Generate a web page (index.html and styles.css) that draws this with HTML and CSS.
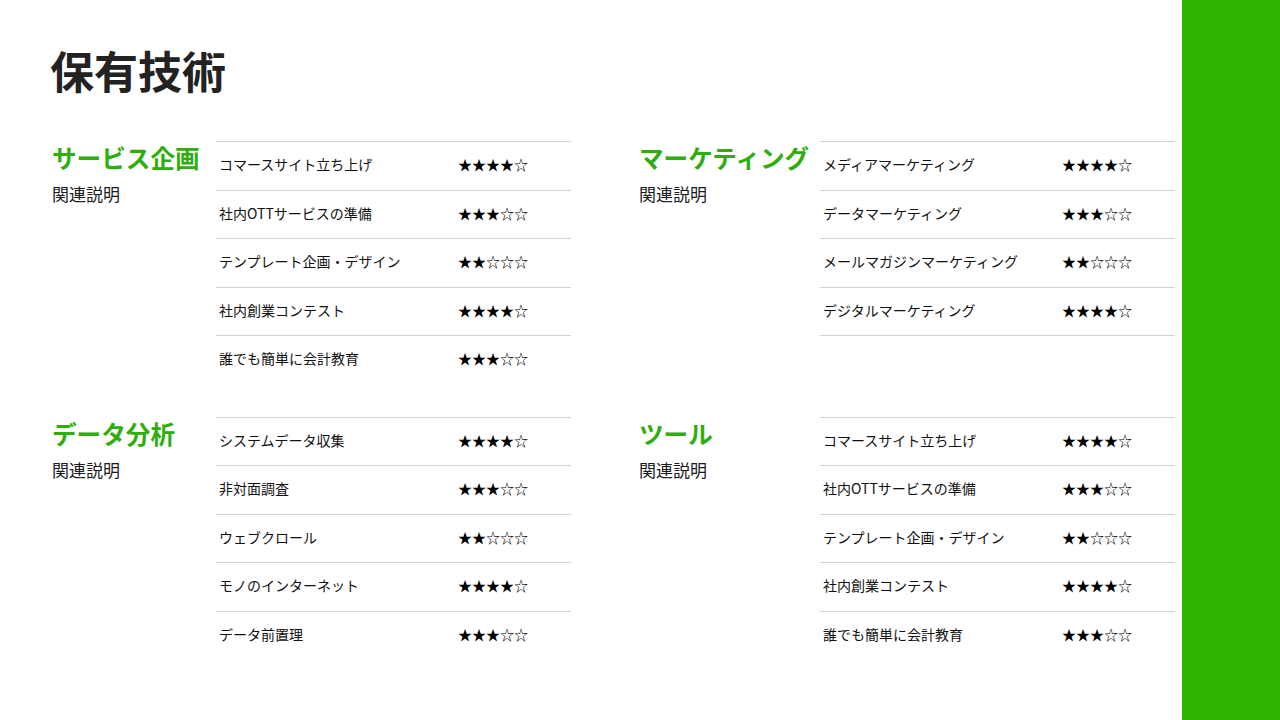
FILE: index.html
```html
<!DOCTYPE html>
<html lang="ja">
<head>
<meta charset="utf-8">
<title>保有技術</title>
<link rel="stylesheet" href="styles.css">
</head>
<body>
<div class="page">
  <main class="main">
    <h1 class="title">保有技術</h1>
    <div class="grid">
      <section class="sec sec-left">
        <div class="label">
          <h2 class="sec-title">サービス企画</h2>
          <p class="sec-desc">関連説明</p>
        </div>
        <div class="table">
          <div class="row"><span class="name">コマースサイト立ち上げ</span><span class="stars">★★★★☆</span></div>
          <div class="row"><span class="name">社内OTTサービスの準備</span><span class="stars">★★★☆☆</span></div>
          <div class="row"><span class="name">テンプレート企画・デザイン</span><span class="stars">★★☆☆☆</span></div>
          <div class="row"><span class="name">社内創業コンテスト</span><span class="stars">★★★★☆</span></div>
          <div class="row"><span class="name">誰でも簡単に会計教育</span><span class="stars">★★★☆☆</span></div>
        </div>
      </section>
      <section class="sec sec-right">
        <div class="label">
          <h2 class="sec-title">マーケティング</h2>
          <p class="sec-desc">関連説明</p>
        </div>
        <div class="table">
          <div class="row"><span class="name">メディアマーケティング</span><span class="stars">★★★★☆</span></div>
          <div class="row"><span class="name">データマーケティング</span><span class="stars">★★★☆☆</span></div>
          <div class="row"><span class="name">メールマガジンマーケティング</span><span class="stars">★★☆☆☆</span></div>
          <div class="row"><span class="name">デジタルマーケティング</span><span class="stars">★★★★☆</span></div>
          <div class="row row-empty"></div>
        </div>
      </section>
      <section class="sec sec-left">
        <div class="label">
          <h2 class="sec-title">データ分析</h2>
          <p class="sec-desc">関連説明</p>
        </div>
        <div class="table">
          <div class="row"><span class="name">システムデータ収集</span><span class="stars">★★★★☆</span></div>
          <div class="row"><span class="name">非対面調査</span><span class="stars">★★★☆☆</span></div>
          <div class="row"><span class="name">ウェブクロール</span><span class="stars">★★☆☆☆</span></div>
          <div class="row"><span class="name">モノのインターネット</span><span class="stars">★★★★☆</span></div>
          <div class="row"><span class="name">データ前置理</span><span class="stars">★★★☆☆</span></div>
        </div>
      </section>
      <section class="sec sec-right">
        <div class="label">
          <h2 class="sec-title">ツール</h2>
          <p class="sec-desc">関連説明</p>
        </div>
        <div class="table">
          <div class="row"><span class="name">コマースサイト立ち上げ</span><span class="stars">★★★★☆</span></div>
          <div class="row"><span class="name">社内OTTサービスの準備</span><span class="stars">★★★☆☆</span></div>
          <div class="row"><span class="name">テンプレート企画・デザイン</span><span class="stars">★★☆☆☆</span></div>
          <div class="row"><span class="name">社内創業コンテスト</span><span class="stars">★★★★☆</span></div>
          <div class="row"><span class="name">誰でも簡単に会計教育</span><span class="stars">★★★☆☆</span></div>
        </div>
      </section>
    </div>
  </main>
  <aside class="bar"></aside>
</div>
</body>
</html>
```

FILE: styles.css
```css
* { box-sizing: border-box; }
html, body {
  margin: 0;
  padding: 0;
  background: #ffffff;
}
body {
  font-family: "Noto Sans CJK JP", "Noto Sans", sans-serif;
  color: #222222;
}
.page {
  display: flex;
  width: 1280px;
  height: 720px;
  overflow: hidden;
}
.main {
  width: 1182px;
  flex: none;
  padding: 44px 0 0 50px;
}
.bar {
  flex: 1;
  background: #2db300;
}
.title {
  margin: 0;
  font-size: 44px;
  line-height: 53px;
  font-weight: 700;
  color: #222222;
}
.grid {
  margin-top: 44px;
  display: grid;
  grid-template-columns: 522px 538px;
  column-gap: 65px;
  row-gap: 33px;
}
.sec {
  display: flex;
  align-items: flex-start;
}
.label { flex: none; padding-left: 2px; }
.sec-left .label { width: 166px; }
.sec-right .label { width: 183px; }
.sec-title {
  margin: -1px 0 0;
  font-size: 24.6px;
  line-height: 35px;
  font-weight: 700;
  color: #2eae0c;
  white-space: nowrap;
}
.sec-desc {
  margin: 6px 0 0;
  font-size: 17px;
  line-height: 26px;
  font-weight: 400;
  color: #1a1a1a;
}
.table {
  width: 355px;
  flex: none;
}
.row {
  display: flex;
  align-items: center;
  height: 48.5px;
  padding-bottom: 3px;
  border-top: 1px solid #d2d2d2;
  font-size: 14px;
  font-weight: 400;
  color: #111111;
}
.name {
  width: 242px;
  padding-left: 3px;
  flex: none;
  white-space: nowrap;
}
.stars {
  font-size: 14px;
  font-weight: 400;
  color: #000000;
  white-space: nowrap;
}
```
